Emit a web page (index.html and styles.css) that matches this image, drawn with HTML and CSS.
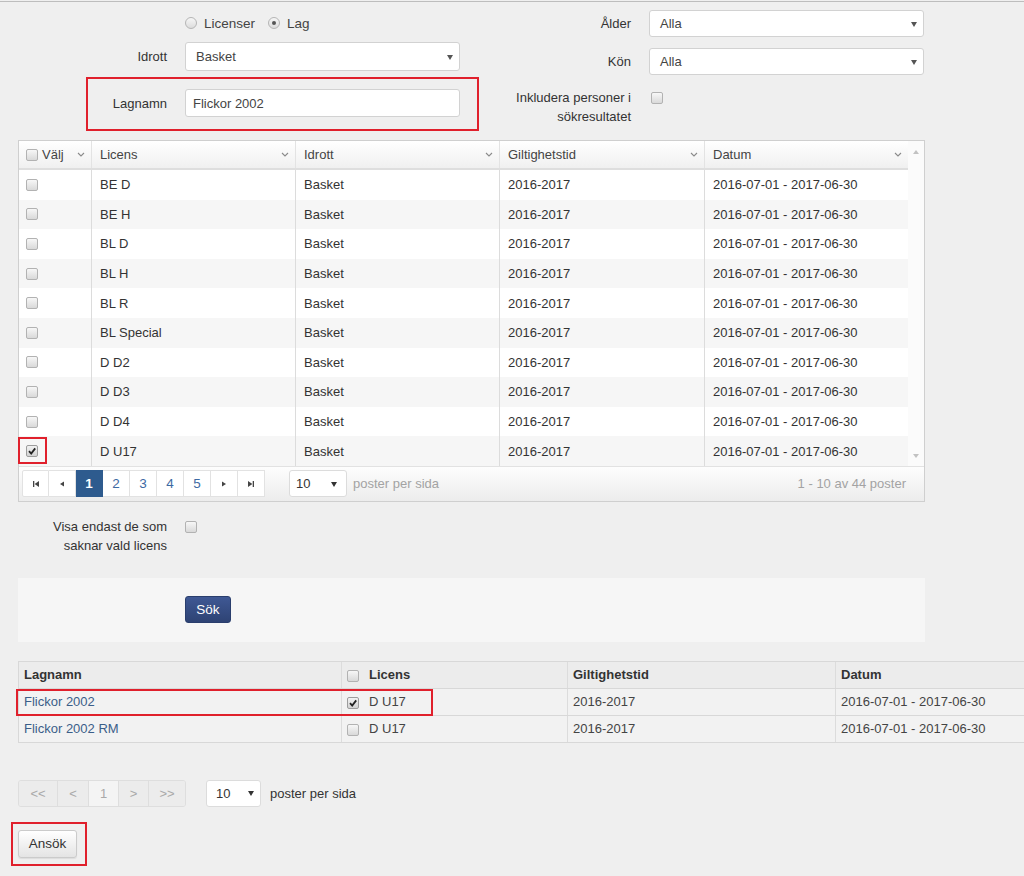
FILE: index.html
```html
<!DOCTYPE html>
<html lang="sv">
<head>
<meta charset="utf-8">
<title>Licenser</title>
<link rel="stylesheet" href="styles.css">
</head>
<body>
<div class="page">
  <div class="form">
    <div class="col-left">
      <div class="row radio-row">
        <div class="lbl"></div>
        <div class="ctl radios">
          <span class="radio"></span><span class="rlabel">Licenser</span>
          <span class="radio checked"></span><span class="rlabel">Lag</span>
        </div>
      </div>
      <div class="row sel-row">
        <div class="lbl">Idrott</div>
        <div class="ctl select tall">Basket<span class="caret"></span></div>
      </div>
      <div class="row hl-row">
        <div class="lbl short">Lagnamn</div>
        <div class="ctl input">Flickor 2002</div>
      </div>
    </div>
    <div class="col-right">
      <div class="row r1">
        <div class="lbl wide">Ålder</div>
        <div class="ctl select">Alla<span class="caret"></span></div>
      </div>
      <div class="row r2">
        <div class="lbl wide">Kön</div>
        <div class="ctl select">Alla<span class="caret"></span></div>
      </div>
      <div class="row r3 top">
        <div class="lbl wide multi">Inkludera personer i<br>sökresultatet</div>
        <div class="ctl"><span class="cb cb-top"></span></div>
      </div>
    </div>
  </div>

  <div class="grid">
    <div class="grid-main">
      <div class="grid-table">
        <div class="grow ghead">
          <div class="gh gh-first"><span class="hl"><span class="cb"></span><span>Välj</span></span><svg class="chev" width="8" height="5" viewBox="0 0 8 5"><polyline points="1,1 4,4 7,1" fill="none" stroke="#8a8a8a" stroke-width="1.1"/></svg></div>
          <div class="gh"><span>Licens</span><svg class="chev" width="8" height="5" viewBox="0 0 8 5"><polyline points="1,1 4,4 7,1" fill="none" stroke="#8a8a8a" stroke-width="1.1"/></svg></div>
          <div class="gh"><span>Idrott</span><svg class="chev" width="8" height="5" viewBox="0 0 8 5"><polyline points="1,1 4,4 7,1" fill="none" stroke="#8a8a8a" stroke-width="1.1"/></svg></div>
          <div class="gh"><span>Giltighetstid</span><svg class="chev" width="8" height="5" viewBox="0 0 8 5"><polyline points="1,1 4,4 7,1" fill="none" stroke="#8a8a8a" stroke-width="1.1"/></svg></div>
          <div class="gh"><span>Datum</span><svg class="chev" width="8" height="5" viewBox="0 0 8 5"><polyline points="1,1 4,4 7,1" fill="none" stroke="#8a8a8a" stroke-width="1.1"/></svg></div>
        </div>
        <div class="grow"><div class="gc gc-first"><span class="cb"></span></div><div class="gc">BE D</div><div class="gc">Basket</div><div class="gc">2016-2017</div><div class="gc">2016-07-01 - 2017-06-30</div></div>
        <div class="grow alt"><div class="gc gc-first"><span class="cb"></span></div><div class="gc">BE H</div><div class="gc">Basket</div><div class="gc">2016-2017</div><div class="gc">2016-07-01 - 2017-06-30</div></div>
        <div class="grow"><div class="gc gc-first"><span class="cb"></span></div><div class="gc">BL D</div><div class="gc">Basket</div><div class="gc">2016-2017</div><div class="gc">2016-07-01 - 2017-06-30</div></div>
        <div class="grow alt"><div class="gc gc-first"><span class="cb"></span></div><div class="gc">BL H</div><div class="gc">Basket</div><div class="gc">2016-2017</div><div class="gc">2016-07-01 - 2017-06-30</div></div>
        <div class="grow"><div class="gc gc-first"><span class="cb"></span></div><div class="gc">BL R</div><div class="gc">Basket</div><div class="gc">2016-2017</div><div class="gc">2016-07-01 - 2017-06-30</div></div>
        <div class="grow alt"><div class="gc gc-first"><span class="cb"></span></div><div class="gc">BL Special</div><div class="gc">Basket</div><div class="gc">2016-2017</div><div class="gc">2016-07-01 - 2017-06-30</div></div>
        <div class="grow"><div class="gc gc-first"><span class="cb"></span></div><div class="gc">D D2</div><div class="gc">Basket</div><div class="gc">2016-2017</div><div class="gc">2016-07-01 - 2017-06-30</div></div>
        <div class="grow alt"><div class="gc gc-first"><span class="cb"></span></div><div class="gc">D D3</div><div class="gc">Basket</div><div class="gc">2016-2017</div><div class="gc">2016-07-01 - 2017-06-30</div></div>
        <div class="grow"><div class="gc gc-first"><span class="cb"></span></div><div class="gc">D D4</div><div class="gc">Basket</div><div class="gc">2016-2017</div><div class="gc">2016-07-01 - 2017-06-30</div></div>
        <div class="grow alt"><div class="gc gc-first marked"><span class="cb checked"><svg width="10" height="10" viewBox="0 0 10 10"><path d="M2 5.2 L4.2 7.6 L8.2 2.4" fill="none" stroke="#222" stroke-width="1.8"/></svg></span><span class="redframe small"></span></div><div class="gc">D U17</div><div class="gc">Basket</div><div class="gc">2016-2017</div><div class="gc">2016-07-01 - 2017-06-30</div></div>
      </div>
      <div class="vscroll">
        <span class="sarrow up"></span>
        <span class="sarrow down"></span>
      </div>
    </div>
    <div class="grid-pager">
      <div class="pages">
        <span class="pg"><svg width="8" height="8" viewBox="0 0 8 8"><rect x="1" y="1" width="1.3" height="6" fill="#444"/><polygon points="7,1 7,7 2.6,4" fill="#444"/></svg></span>
        <span class="pg"><svg width="8" height="8" viewBox="0 0 8 8"><polygon points="6,1.5 6,6.5 2,4" fill="#444"/></svg></span>
        <span class="pg active">1</span>
        <span class="pg">2</span>
        <span class="pg">3</span>
        <span class="pg">4</span>
        <span class="pg">5</span>
        <span class="pg"><svg width="8" height="8" viewBox="0 0 8 8"><polygon points="2,1.5 2,6.5 6,4" fill="#444"/></svg></span>
        <span class="pg last"><svg width="8" height="8" viewBox="0 0 8 8"><polygon points="1,1 1,7 5.4,4" fill="#444"/><rect x="5.7" y="1" width="1.3" height="6" fill="#444"/></svg></span>
      </div>
      <div class="psel">10<span class="caret dark"></span></div>
      <span class="pinfo">poster per sida</span>
      <span class="pcount">1 - 10 av 44 poster</span>
    </div>
  </div>

  <div class="row visa top">
    <div class="lbl multi">Visa endast de som<br>saknar vald licens</div>
    <div class="ctl"><span class="cb cb-top"></span></div>
  </div>

  <div class="search-panel">
    <button class="btn-primary" type="button">Sök</button>
  </div>

  <div class="rtable">
    <div class="rrow rhead">
      <div class="rc">Lagnamn</div>
      <div class="rc rc-lic"><span class="cb"></span><span>Licens</span></div>
      <div class="rc">Giltighetstid</div>
      <div class="rc">Datum</div>
    </div>
    <div class="rrow">
      <div class="rc"><span class="link">Flickor 2002</span></div>
      <div class="rc rc-lic"><span class="cb checked"><svg width="10" height="10" viewBox="0 0 10 10"><path d="M2 5.2 L4.2 7.6 L8.2 2.4" fill="none" stroke="#222" stroke-width="1.8"/></svg></span><span>D U17</span></div>
      <div class="rc">2016-2017</div>
      <div class="rc">2016-07-01 - 2017-06-30</div>
    </div>
    <div class="rrow">
      <div class="rc"><span class="link">Flickor 2002 RM</span></div>
      <div class="rc rc-lic"><span class="cb"></span><span>D U17</span></div>
      <div class="rc">2016-2017</div>
      <div class="rc">2016-07-01 - 2017-06-30</div>
    </div>
    <span class="redframe wide-frame"></span>
  </div>

  <div class="bpager">
    <div class="bpages">
      <span class="bp w1">&lt;&lt;</span>
      <span class="bp w2">&lt;</span>
      <span class="bp w3 cur">1</span>
      <span class="bp w3">&gt;</span>
      <span class="bp w4">&gt;&gt;</span>
    </div>
    <div class="bsel">10<span class="caret dark"></span></div>
    <span class="binfo">poster per sida</span>
  </div>

  <div class="apply-box">
    <button class="btn-default" type="button">Ansök</button>
  </div>
</div>
</body>
</html>
```

FILE: styles.css
```css
* { box-sizing: border-box; }

html, body {
  margin: 0;
  padding: 0;
  background: #efefef;
}

body {
  padding-top: 1px;
  font-family: "Liberation Sans", Arial, sans-serif;
  font-size: 13px;
  color: #333;
  overflow: hidden;
}

.page {
  border-top: 1px solid #bdbdbd;
  width: 1024px;
  height: 874px;
  overflow: hidden;
}

/* ---------- form ---------- */
.form {
  display: flex;
  gap: 18px;
  align-items: flex-start;
}

.col-left { width: 460px; display: flex; flex-direction: column; }
.col-right { width: 447px; display: flex; flex-direction: column; }

.row {
  display: flex;
  align-items: center;
  gap: 18px;
}
.row.top { align-items: flex-start; }

.lbl {
  width: 167px;
  text-align: right;
  color: #333;
  flex: none;
}
.lbl.short { width: 79px; }
.lbl.wide { width: 153px; }
.lbl.multi { line-height: 19px; }

.ctl { width: 275px; flex: none; }

.radio-row { margin-top: 11px; height: 20px; }
.radios { display: flex; align-items: center; }
.radio {
  width: 12px;
  height: 12px;
  border-radius: 50%;
  border: 1px solid #b5b5b5;
  background: linear-gradient(#f6f6f6, #dcdcdc);
  position: relative;
  flex: none;
}
.radio.checked::after {
  content: "";
  position: absolute;
  left: 3px;
  top: 3px;
  width: 4px;
  height: 4px;
  border-radius: 50%;
  background: #555;
}
.rlabel { margin-left: 7px; margin-right: 13px; color: #444; font-size: 13.5px; }

.select, .input {
  height: 27px;
  background: #fff;
  border: 1px solid #d2d2d2;
  border-radius: 3px;
  display: flex;
  align-items: center;
  padding-left: 10px;
  color: #444;
  position: relative;
}
.select.tall { height: 29px; }
.input { padding-left: 7px; height: 28px; }

.caret {
  position: absolute;
  right: 6px;
  top: 50%;
  margin-top: -2px;
  width: 0;
  height: 0;
  border-left: 3px solid transparent;
  border-right: 3px solid transparent;
  border-top: 5px solid #555;
}
.caret.dark { border-top-color: #333; }

.sel-row { margin-top: 9px; }

.hl-row {
  margin-top: 6px;
  margin-left: 86px;
  width: 393px;
  border: 2px solid #e0202c;
  padding: 10px 17px 12px 0;
}

.r1 { margin-top: 8px; }
.r2 { margin-top: 11px; }
.r3 { margin-top: 13px; }

.cb {
  display: inline-flex;
  align-items: center;
  justify-content: center;
  width: 12px;
  height: 12px;
  border: 1px solid #b2b2b2;
  border-radius: 2px;
  background: linear-gradient(#f7f7f7, #d9d9d9);
  flex: none;
  vertical-align: middle;
}
.cb.checked { background: linear-gradient(#f2f2f2, #d2d2d2); border-color: #9c9c9c; }
.cb-top { margin-top: 3px; margin-left: 2px; }

/* ---------- grid ---------- */
.grid {
  margin-top: 9px;
  margin-left: 18px;
  width: 907px;
  border: 1px solid #cfcfcf;
  background: #fff;
}

.grid-main { display: flex; }
.grid-table { width: 889px; }

.grow {
  display: grid;
  grid-template-columns: 72px 204px 204px 205px 204px;
  height: 29.6px;
  background: #fff;
}
.grow.alt { background: #f6f6f6; }

.ghead {
  height: 29px;
  background: linear-gradient(#ffffff, #f0f0f0);
  border-bottom: 2px solid #dedede;
}

.gh {
  display: flex;
  align-items: center;
  justify-content: space-between;
  padding: 0 6px 0 8px;
  border-left: 1px solid #e3e3e3;
  color: #444;
}
.gh-first { border-left: 0; padding-left: 7px; }
.hl { display: flex; align-items: center; gap: 4px; }
.chev { flex: none; }

.gc {
  display: flex;
  align-items: center;
  padding-left: 8px;
  border-left: 1px solid #dcdcdc;
  color: #333;
}
.gc-first { border-left: 0; padding-left: 7px; position: relative; }

.redframe {
  position: absolute;
  border: 2px solid #e0202c;
  pointer-events: none;
}
.redframe.small { left: -1px; top: 1px; width: 29px; height: 27px; }

.vscroll {
  width: 16px;
  background: #fbfbfb;
  display: flex;
  flex-direction: column;
  justify-content: space-between;
  align-items: center;
  padding: 9px 0 8px;
}
.sarrow {
  width: 0;
  height: 0;
  border-left: 3px solid transparent;
  border-right: 3px solid transparent;
}
.sarrow.up { border-bottom: 4px solid #c2c2c2; }
.sarrow.down { border-top: 4px solid #c2c2c2; }

.grid-pager {
  height: 35px;
  border-top: 1px solid #e2e2e2;
  background: linear-gradient(#fdfdfd, #ececec);
  display: flex;
  align-items: center;
  padding-left: 3px;
  padding-right: 18px;
}
.pages { display: flex; }
.pg {
  width: 27px;
  height: 27px;
  display: flex;
  align-items: center;
  justify-content: center;
  background: #fff;
  border: 1px solid #e2e2e2;
  border-left-width: 0;
  color: #3d6aa3;
  font-size: 13.5px;
}
.pg:first-child { border-left-width: 1px; border-radius: 2px 0 0 2px; }
.pg.active { background: #2e5b8e; color: #fff; font-weight: bold; border-color: #2e5b8e; }

.psel {
  margin-left: 24px;
  width: 58px;
  height: 27px;
  background: #fff;
  border: 1px solid #dcdcdc;
  border-radius: 3px;
  display: flex;
  align-items: center;
  padding-left: 6px;
  position: relative;
  color: #333;
}
.psel .caret { right: 9px; }
.pinfo { margin-left: 6px; color: #a3a3a3; }
.pcount { margin-left: auto; color: #a3a3a3; }

/* ---------- visa ---------- */
.visa { margin-top: 15px; }
.visa .cb-top { margin-top: 3px; margin-left: 0; }

/* ---------- search panel ---------- */
.search-panel {
  margin-top: 23px;
  margin-left: 18px;
  width: 907px;
  height: 64px;
  background: #f6f6f6;
  padding: 18px 0 0 167px;
}
.btn-primary {
  width: 46px;
  height: 27px;
  border: 1px solid #2a3e6d;
  border-radius: 3px;
  background: linear-gradient(#3f5894, #2e4374);
  color: #fff;
  font-family: "Liberation Sans", Arial, sans-serif;
  font-size: 13.5px;
  padding: 0;
}

/* ---------- result table ---------- */
.rtable {
  position: relative;
  margin-top: 19px;
  margin-left: 18px;
  width: 1040px;
  border: 1px solid #d8d8d8;
  border-bottom: 0;
}
.rrow {
  display: grid;
  grid-template-columns: 322px 226px 268px 223px;
  height: 27px;
  border-bottom: 1px solid #d8d8d8;
  background: #f2f2f2;
}
.rhead { height: 27px; background: #ececec; font-weight: bold; color: #333; }
.rc {
  display: flex;
  align-items: center;
  padding-left: 5px;
  border-left: 1px solid #dcdcdc;
  color: #444;
}
.rc:first-child { border-left: 0; }
.rhead .rc { color: #333; }
.rc-lic { gap: 10px; padding-left: 5px; }
.rc-lic .cb { margin-top: 2px; }
.link { color: #3b5e89; }

.redframe.wide-frame { left: -3px; top: 27px; width: 417px; height: 27px; }

/* ---------- bottom pager ---------- */
.bpager {
  margin-top: 37px;
  margin-left: 18px;
  display: flex;
  align-items: center;
  height: 27px;
}
.bpages { display: flex; border: 1px solid #dedede; border-radius: 3px; overflow: hidden; }
.bp {
  height: 25px;
  display: flex;
  align-items: center;
  justify-content: center;
  background: #ececec;
  color: #a9a9a9;
  border-left: 1px solid #dedede;
}
.bp:first-child { border-left: 0; }
.bp.cur { background: #f4f4f4; }
.bp.w1 { width: 38px; }
.bp.w2 { width: 31px; }
.bp.w3 { width: 30px; }
.bp.w4 { width: 37px; }

.bsel {
  margin-left: 20px;
  width: 55px;
  height: 27px;
  background: #fff;
  border: 1px solid #dcdcdc;
  border-radius: 3px;
  display: flex;
  align-items: center;
  padding-left: 9px;
  position: relative;
  color: #333;
}
.bsel .caret { right: 6px; }
.binfo { margin-left: 9px; color: #333; }

/* ---------- apply ---------- */
.apply-box {
  margin-top: 15px;
  margin-left: 11px;
  width: 76px;
  height: 44px;
  border: 2px solid #e0202c;
  padding: 6px 0 0 5px;
}
.btn-default {
  width: 59px;
  height: 28px;
  border: 1px solid #cbcbcb;
  border-radius: 3px;
  background: linear-gradient(#ffffff, #e4e4e4);
  color: #333;
  font-family: "Liberation Sans", Arial, sans-serif;
  font-size: 13.5px;
  padding: 0;
  box-shadow: 0 1px 1px rgba(0,0,0,0.08);
}
```
